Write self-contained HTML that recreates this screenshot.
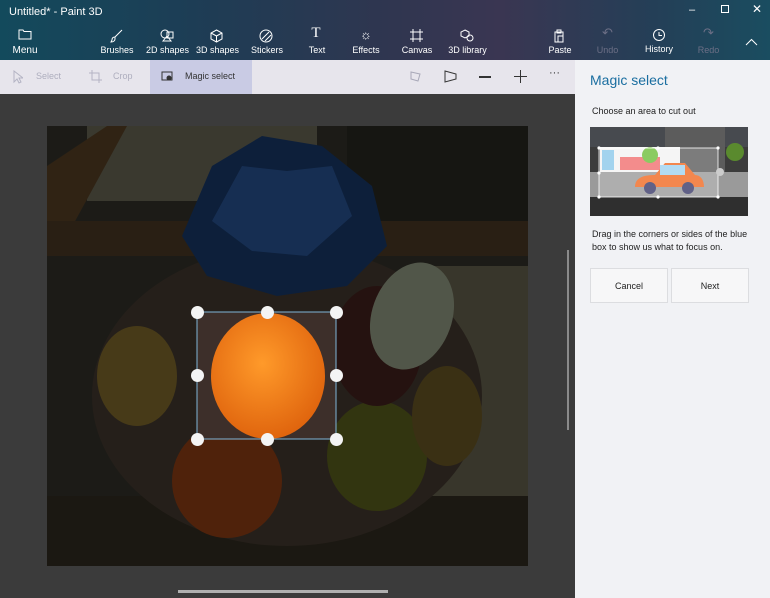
<!DOCTYPE html>
<html><head><meta charset="utf-8"><style>
*{margin:0;padding:0;box-sizing:border-box}
body{width:770px;height:598px;overflow:hidden;font-family:"Liberation Sans",sans-serif;background:#3b3b3b;position:relative}
.hdr{position:absolute;left:0;top:0;width:770px;height:60px;background:linear-gradient(90deg,#134a5c 0%,#1d3d55 25%,#2f3650 50%,#3a3652 65%,#243f57 85%,#1a4d60 100%);color:#fff}
.t{position:absolute;font-size:9px;color:#fff;text-align:center}
.ic{position:absolute}
.tb{position:absolute;left:0;top:60px;width:575px;height:34px;background:#e7e5ec}
.panel{position:absolute;left:575px;top:60px;width:195px;height:538px;background:#f1f2f5}
.btn{position:absolute;top:208px;width:78px;height:35px;background:#f7f7f8;border:1px solid #dcdde0;font-size:9px;color:#222;text-align:center;line-height:34px}
.h{position:absolute;width:13px;height:13px;border-radius:50%;background:#f4f4f4;margin:-6.5px 0 0 -6.5px}
</style></head><body>
<div class="hdr">
<div style="position:absolute;left:9px;top:6px;font-size:11px">Untitled* - Paint 3D</div>
<div style="position:absolute;left:689px;top:4px;font-size:11px">–</div>
<div style="position:absolute;left:721px;top:5px;width:8px;height:8px;border:1px solid #fff"></div>
<div style="position:absolute;left:752px;top:2px;font-size:12px">✕</div>
<svg class="ic" style="left:18px;top:28px" width="14" height="12"><path d="M1 2h4l1 1.5h7V11H1z" fill="none" stroke="#fff"/></svg>
<div class="t" style="left:5px;top:45px;width:40px;font-size:10px">Menu</div>
<svg class="ic" style="left:110px;top:29px" width="13" height="14"><path d="M12 1L5 8M5 8c-2 0-3 1-3 3l-1 2c2 0 4-1 4-3z" fill="none" stroke="#fff"/></svg>
<div class="t" style="left:97px;top:45px;width:40px">Brushes</div>
<svg class="ic" style="left:160px;top:29px" width="14" height="13"><circle cx="5" cy="5" r="4" fill="none" stroke="#fff"/><path d="M7 3h6v6H7zM3 12l4-5 4 5z" fill="none" stroke="#fff"/></svg>
<div class="t" style="left:145px;top:45px;width:45px">2D shapes</div>
<svg class="ic" style="left:210px;top:29px" width="13" height="14"><path d="M6.5 1L12 4v6l-5.5 3L1 10V4zM1 4l5.5 3L12 4M6.5 7v6" fill="none" stroke="#fff"/></svg>
<div class="t" style="left:195px;top:45px;width:45px">3D shapes</div>
<svg class="ic" style="left:259px;top:29px" width="14" height="14"><circle cx="7" cy="7" r="6" fill="none" stroke="#fff"/><path d="M3 10L10 3M6 12l6-6" stroke="#fff"/></svg>
<div class="t" style="left:247px;top:45px;width:40px">Stickers</div>
<div class="t" style="left:306px;top:25px;width:20px;font-size:15px;font-family:'Liberation Serif',serif">T</div>
<div class="t" style="left:297px;top:45px;width:40px">Text</div>
<div class="t" style="left:356px;top:27px;width:20px;font-size:13px">☼</div>
<div class="t" style="left:346px;top:45px;width:40px">Effects</div>
<svg class="ic" style="left:410px;top:29px" width="13" height="13"><path d="M3 0v13M10 0v13M0 3h13M0 10h13" stroke="#fff"/></svg>
<div class="t" style="left:397px;top:45px;width:40px">Canvas</div>
<svg class="ic" style="left:460px;top:29px" width="14" height="13"><path d="M5 1l4 2v4L5 9 1 7V3z" fill="none" stroke="#fff"/><circle cx="10" cy="9" r="3" fill="none" stroke="#fff"/></svg>
<div class="t" style="left:445px;top:45px;width:45px">3D library</div>
<svg class="ic" style="left:553px;top:29px" width="12" height="14"><path d="M2 3h8v10H2zM4 1h4v3H4zM5 7h5v6H5z" fill="none" stroke="#fff"/></svg>
<div class="t" style="left:540px;top:45px;width:40px">Paste</div>
<div class="t" style="left:590px;top:25px;width:35px;color:#6c6f86;font-size:13px">↶</div>
<div class="t" style="left:590px;top:45px;width:35px;color:#6c6f86">Undo</div>
<svg class="ic" style="left:652px;top:28px" width="14" height="14"><circle cx="7" cy="7" r="5.5" fill="none" stroke="#fff"/><path d="M7 4v3.5h3" fill="none" stroke="#fff"/></svg>
<div class="t" style="left:639px;top:44px;width:40px">History</div>
<div class="t" style="left:691px;top:25px;width:35px;color:#6c6f86;font-size:13px">↷</div>
<div class="t" style="left:691px;top:45px;width:35px;color:#6c6f86">Redo</div>
<svg class="ic" style="left:745px;top:38px" width="13" height="8"><path d="M1 7l5.5-5.5L12 7" fill="none" stroke="#fff"/></svg>
</div>
<div class="tb">
<svg class="ic" style="left:13px;top:10px" width="10" height="14"><path d="M1 1v11l3-3 2 4 2-1-2-4h4z" fill="none" stroke="#b4b4c4"/></svg>
<div style="position:absolute;left:36px;top:11px;font-size:9px;color:#aeaebe">Select</div>
<svg class="ic" style="left:89px;top:10px" width="13" height="13"><path d="M3 0v10h10M0 3h10v10" fill="none" stroke="#b4b4c4"/></svg>
<div style="position:absolute;left:113px;top:11px;font-size:9px;color:#aeaebe">Crop</div>
<div style="position:absolute;left:150px;top:0;width:102px;height:34px;background:#c9cbe4"></div>
<svg class="ic" style="left:161px;top:11px" width="14" height="12"><path d="M1 1h10v8H1z" fill="none" stroke="#333"/><circle cx="8" cy="7" r="2.5" fill="#333"/></svg>
<div style="position:absolute;left:185px;top:11px;font-size:9px;color:#333">Magic select</div>
<svg class="ic" style="left:409px;top:10px" width="13" height="13"><path d="M2 2l9 2-2 7-7-2z" fill="none" stroke="#a8a8b8"/></svg>
<svg class="ic" style="left:444px;top:10px" width="13" height="13"><path d="M1 1l11 3v5L1 12z" fill="none" stroke="#333"/></svg>
<div style="position:absolute;left:479px;top:16px;width:12px;height:1.5px;background:#333"></div>
<div style="position:absolute;left:514px;top:16px;width:13px;height:1px;background:#333"></div><div style="position:absolute;left:520px;top:10px;width:1px;height:13px;background:#333"></div>
<div style="position:absolute;left:549px;top:7px;font-size:11px;color:#333">···</div>
</div>
<svg style="position:absolute;left:47px;top:126px" width="481" height="440" viewBox="0 0 481 440">
<defs><radialGradient id="o" cx="0.45" cy="0.4" r="0.6"><stop offset="0" stop-color="#ff9a2a"/><stop offset="1" stop-color="#e0650e"/></radialGradient></defs>
<rect width="481" height="440" fill="#2c2a24"/>
<rect x="40" y="0" width="230" height="75" fill="#5a5849"/>
<rect x="300" y="0" width="181" height="95" fill="#23221d"/>
<path d="M0 40L60 0h20L20 110 0 130z" fill="#4a3720"/>
<rect x="0" y="95" width="481" height="35" fill="#3f3120"/>
<rect x="380" y="140" width="101" height="250" fill="#575443"/>
<rect x="0" y="370" width="481" height="70" fill="#2a251c"/>
<ellipse cx="240" cy="270" rx="195" ry="150" fill="#3a3128"/>
<ellipse cx="90" cy="250" rx="40" ry="50" fill="#6d5a25"/>
<ellipse cx="180" cy="355" rx="55" ry="57" fill="#7a3512"/>
<ellipse cx="330" cy="330" rx="50" ry="55" fill="#4e5219"/>
<ellipse cx="400" cy="290" rx="35" ry="50" fill="#5a4a20"/>
<ellipse cx="330" cy="220" rx="45" ry="60" fill="#3a1d1a"/>
<ellipse cx="365" cy="190" rx="40" ry="55" fill="#7d8570" transform="rotate(20 365 190)"/>
<path d="M135 110l30-70 50-30 60 10 50 40 15 60-40 40-70 10-70-20z" fill="#15305a"/>
<path d="M165 95l30-55 45 5 45-5 20 50-45 40-55-5z" fill="#23487f"/>
<rect width="481" height="440" fill="rgba(0,0,0,0.35)"/>
<rect x="150" y="186" width="139" height="127" fill="#3d2f2a"/>
<ellipse cx="221" cy="250" rx="57" ry="63" fill="url(#o)"/>
<rect x="150" y="186" width="139" height="127" fill="none" stroke="#7fb6d8" stroke-width="1"/>
</svg>
<div class="h" style="left:197px;top:312px"></div><div class="h" style="left:267px;top:312px"></div><div class="h" style="left:336px;top:312px"></div>
<div class="h" style="left:197px;top:375px"></div><div class="h" style="left:336px;top:375px"></div>
<div class="h" style="left:197px;top:439px"></div><div class="h" style="left:267px;top:439px"></div><div class="h" style="left:336px;top:439px"></div>
<div style="position:absolute;left:567px;top:250px;width:2px;height:180px;background:#8a8a8a"></div>
<div style="position:absolute;left:178px;top:590px;width:210px;height:3px;background:#b0b0b0"></div>
<div class="panel">
<div style="position:absolute;left:15px;top:12px;font-size:14px;color:#1a6ea0">Magic select</div>
<div style="position:absolute;left:17px;top:46px;font-size:9px;color:#222">Choose an area to cut out</div>
<svg style="position:absolute;left:15px;top:67px" width="158" height="89" viewBox="0 0 158 89">
<rect width="158" height="89" fill="#3c3c3c"/>
<rect x="0" y="0" width="158" height="20" fill="#474a4f"/>
<rect x="75" y="0" width="60" height="45" fill="#5c5c5c"/>
<rect x="10" y="20" width="80" height="30" fill="#f3f3f3"/>
<rect x="12" y="23" width="12" height="20" fill="#8bc8ea"/>
<rect x="30" y="30" width="40" height="13" fill="#f07070"/>
<circle cx="60" cy="28" r="8" fill="#6fbf3a"/>
<circle cx="145" cy="25" r="9" fill="#5a8a2e"/>
<rect x="0" y="45" width="158" height="25" fill="#9a9a9a"/>
<rect x="0" y="70" width="158" height="19" fill="#2f2f2f"/>
<path d="M45 60c0-10 10-12 20-12l10-12h20l10 12c5 0 9 4 9 12z" fill="#f06a22"/>
<rect x="70" y="38" width="25" height="10" fill="#9fd3f0"/>
<circle cx="60" cy="61" r="6" fill="#3a3a6a"/><circle cx="98" cy="61" r="6" fill="#3a3a6a"/>
<rect x="9" y="21" width="119" height="49" fill="rgba(255,255,255,0.2)" stroke="#fff" stroke-width="0.8"/>
<g fill="#fff"><circle cx="9" cy="21" r="1.6"/><circle cx="68" cy="21" r="1.6"/><circle cx="128" cy="21" r="1.6"/><circle cx="9" cy="46" r="1.6"/><circle cx="9" cy="70" r="1.6"/><circle cx="68" cy="70" r="1.6"/><circle cx="128" cy="70" r="1.6"/></g>
<circle cx="130" cy="45" r="4" fill="#ccc"/>
</svg>
<div style="position:absolute;left:17px;top:168px;width:170px;font-size:9px;line-height:13px;color:#222">Drag in the corners or sides of the blue box to show us what to focus on.</div>
<div class="btn" style="left:15px">Cancel</div>
<div class="btn" style="left:96px">Next</div>
</div>
</body></html>
